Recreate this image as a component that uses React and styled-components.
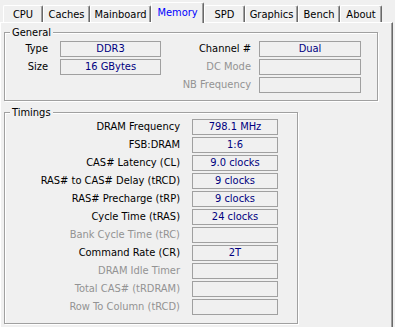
import React from "react";
import styled, { createGlobalStyle, css } from "styled-components";

const Global = createGlobalStyle`
  html, body { margin: 0; padding: 0; background: #f0f0f0; }
  body {
    font-family: "DejaVu Sans Condensed", "DejaVu Sans", "Liberation Sans", sans-serif;
    font-stretch: condensed;
    font-size: 11px;
    color: #000;
  }
`;

const Window = styled.div`
  width: 395px;
  height: 327px;
  overflow: hidden;
  display: flex;
  flex-direction: column;
  background: #f0f0f0;
`;

const TabStrip = styled.div`
  display: flex;
  align-items: flex-end;
  height: 22px;
  padding-left: 3px;
  position: relative;
  z-index: 1;
`;

const Tab = styled.div`
  box-sizing: border-box;
  width: ${(p) => p.$w}px;
  height: 17px;
  display: flex;
  align-items: center;
  justify-content: center;
  border-top: 1px solid #fff;
  border-left: 1px solid #fff;
  border-right: 1px solid #696969;
  box-shadow: inset -1px 0 0 #a0a0a0;
  border-top-left-radius: 2px;
  border-top-right-radius: 2px;
  background: #f0f0f0;
  white-space: nowrap;
  color: #000;
  ${(p) =>
    p.$active &&
    css`
      height: 21px;
      margin-bottom: -1px;
      padding-bottom: 1px;
      color: #0000ff;
    `}
`;

const Panel = styled.div`
  box-sizing: border-box;
  width: 393px;
  flex: 1;
  border-top: 1px solid #fff;
  border-left: 1px solid #fff;
  border-right: 1px solid #696969;
  box-shadow: inset -1px 0 0 #a0a0a0;
  padding: 9px 0 0 3px;
  display: flex;
  flex-direction: column;
  gap: 11px;
`;

const Group = styled.div`
  position: relative;
  box-sizing: border-box;
  width: ${(p) => p.$w}px;
  border: 1px solid #a0a0a0;
  box-shadow: inset 1px 1px 0 #fff, 1px 1px 0 #fff;
`;

const Legend = styled.span`
  position: absolute;
  top: -7px;
  left: 5px;
  padding: 0 2px;
  line-height: 13px;
  background: #f0f0f0;
`;

const GeneralGrid = styled.div`
  display: grid;
  grid-template-columns: 55px 101px 98px 102px;
  grid-auto-rows: 16px;
  row-gap: 2px;
  padding: 8px 0 7px 0;
`;

const TimingsGrid = styled.div`
  display: grid;
  grid-template-columns: 187px 86px;
  grid-auto-rows: 16px;
  row-gap: 2px;
  padding: 6px 0 8px 0;
`;

const Label = styled.div`
  text-align: right;
  padding-right: ${(p) => p.$pad}px;
  line-height: 16px;
  white-space: nowrap;
  color: ${(p) => (p.$disabled ? "#939393" : "#000")};
`;

const Value = styled.div`
  box-sizing: border-box;
  height: 16px;
  border: 1px solid #a0a0a0;
  text-align: center;
  line-height: 14px;
  color: #000080;
  white-space: nowrap;
`;

const Empty = styled.div``;

const tabs = [
  ["CPU", 40],
  ["Caches", 47],
  ["Mainboard", 61],
  ["Memory", 53, true],
  ["SPD", 41],
  ["Graphics", 53],
  ["Bench", 42],
  ["About", 42],
];

const general = [
  [["Type", "DDR3"], ["Channel #", "Dual"]],
  [["Size", "16 GBytes"], ["DC Mode", "", true]],
  [null, ["NB Frequency", "", true]],
];

const timings = [
  ["DRAM Frequency", "798.1 MHz"],
  ["FSB:DRAM", "1:6"],
  ["CAS# Latency (CL)", "9.0 clocks"],
  ["RAS# to CAS# Delay (tRCD)", "9 clocks"],
  ["RAS# Precharge (tRP)", "9 clocks"],
  ["Cycle Time (tRAS)", "24 clocks"],
  ["Bank Cycle Time (tRC)", "", true],
  ["Command Rate (CR)", "2T"],
  ["DRAM Idle Timer", "", true],
  ["Total CAS# (tRDRAM)", "", true],
  ["Row To Column (tRCD)", "", true],
];

export default function App() {
  return (
    <>
      <Global />
      <Window>
        <TabStrip>
          {tabs.map(([name, w, active]) => (
            <Tab key={name} $w={w} $active={active}>
              {name}
            </Tab>
          ))}
        </TabStrip>
        <Panel>
          <Group $w={374}>
            <Legend>General</Legend>
            <GeneralGrid>
              {general.map((row, i) =>
                row.map((cell, j) =>
                  cell ? (
                    <React.Fragment key={`${i}-${j}`}>
                      <Label $pad={j === 0 ? 12 : 8} $disabled={cell[2]}>
                        {cell[0]}
                      </Label>
                      <Value>{cell[1]}</Value>
                    </React.Fragment>
                  ) : (
                    <React.Fragment key={`${i}-${j}`}>
                      <Empty />
                      <Empty />
                    </React.Fragment>
                  )
                )
              )}
            </GeneralGrid>
          </Group>
          <Group $w={294}>
            <Legend>Timings</Legend>
            <TimingsGrid>
              {timings.map(([label, value, disabled]) => (
                <React.Fragment key={label}>
                  <Label $pad={12} $disabled={disabled}>
                    {label}
                  </Label>
                  <Value>{value}</Value>
                </React.Fragment>
              ))}
            </TimingsGrid>
          </Group>
        </Panel>
      </Window>
    </>
  );
}
